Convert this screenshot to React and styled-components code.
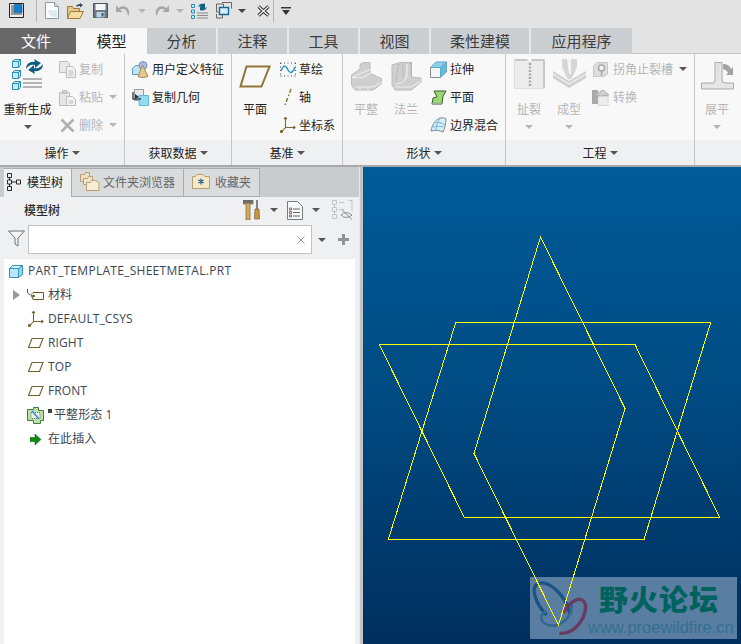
import styled, { createGlobalStyle } from "styled-components";

const CJK = `"Noto Sans CJK SC", "Open Sans", sans-serif`;

const Global = createGlobalStyle`
  html, body { margin: 0; padding: 0; background: #fff; }
  * { box-sizing: border-box; }
`;

/* ---------- icons ---------- */

const Cube = ({ x, y }) => (
  <g transform={`translate(${x} ${y})`}>
    <path d="M.5 2.500 2.500.5h6v6l-2 2h-6z" fill="#c4ecfa" stroke="#2a8db5" />
    <path d="M.5 2.500h6v6M6.500 2.500l2-2" fill="none" stroke="#2a8db5" />
  </g>
);

const RegenIcon = () => (
  <svg width="32" height="34" viewBox="0 0 32 34">
    <Cube x="0" y="0" />
    <Cube x="0" y="11" />
    <Cube x="0" y="22" />
    <path d="M14 10c0-5 4-8 9-7l-1-3 7 4-6 5v-3c-4-1-7 1-9 4zM31 5c0 5-4 8-9 7l1 3-7-4 6-5v3c4 1 7-1 9-4z" fill="#0c5f82" />
    <path d="M11 20h19M11 24h19M11 28h19" stroke="#9c9c9c" strokeWidth="1.600" />
  </svg>
);

const CopyIcon = () => (
  <svg width="17" height="17" viewBox="0 0 17 17" fill="#e8e8e8" stroke="#bdbdbd">
    <path d="M.5.500h8l2 2v9H.5z" />
    <path d="M7.500 5.500h6l3 3v8h-9z" fill="#f2f2f2" />
    <path d="M9.500 10h5M9.500 12h5M9.500 14h5" fill="none" />
  </svg>
);

const PasteIcon = () => (
  <svg width="17" height="17" viewBox="0 0 17 17" fill="#e6e6e6" stroke="#bdbdbd">
    <path d="M.5 3.500h10v13H.5z" />
    <path d="M3.500 1.500h4v3h-4z" fill="#d2d2d2" />
    <path d="M7.500 7.500h6l3 3v6h-9z" fill="#f4f4f4" />
    <path d="M9.500 12h5M9.500 14h5" fill="none" />
  </svg>
);

const DeleteIcon = () => (
  <svg width="15" height="15" viewBox="0 0 15 15">
    <path d="M1.500 1.500l12 12M13.500 1.500l-12 12" stroke="#b0b0b0" strokeWidth="2.600" />
  </svg>
);

const UdfIcon = () => (
  <svg width="17" height="17" viewBox="0 0 17 17">
    <path d="M.5 7.500l3-3h7v9H.5z" fill="#bfe4f3" stroke="#5a9cbc" />
    <circle cx="11" cy="4.500" r="4" fill="#a9b8e6" stroke="#7f8fc4" />
    <path d="M10.500 4 16 15.500q-5 2.400-10 0z" fill="#e3c98f" stroke="#a68b4f" />
  </svg>
);

const CopyGeomIcon = () => (
  <svg width="17" height="17" viewBox="0 0 17 17">
    <path d="M2.500.5h9v11h-9z" fill="#e9e9e9" stroke="#9a9a9a" />
    <path d="M7 6.500h9.500v10H7z" fill="#8fdcf3" stroke="#66b9d4" />
    <path d="M1 3v7h8" fill="none" stroke="#3c4a55" strokeWidth="1.400" />
    <path d="M3 5l4 3-4 2z" fill="#27323c" />
  </svg>
);

const PlaneLargeIcon = () => (
  <svg width="32" height="23" viewBox="0 0 32 23">
    <path d="M7.500 1.500h23l-8 20H1.500z" fill="none" stroke="#8f7638" strokeWidth="2" />
  </svg>
);

const SketchIcon = () => (
  <svg width="16" height="15" viewBox="0 0 16 15">
    <path d="M.5 1h15M.5 14h15M.5 1v13M15.500 1v13" stroke="#3d4a55" strokeDasharray="1 2.500" fill="none" />
    <path d="M1 9c3-8 5-5 7-1s5 3 7-3" fill="none" stroke="#2f97c6" strokeWidth="1.500" />
  </svg>
);

const AxisIcon = () => (
  <svg width="16" height="18" viewBox="0 0 16 18">
    <path d="M11 1 5 17" stroke="#8a7136" strokeWidth="1.500" strokeDasharray="4 2 1.500 2" />
  </svg>
);

const CsysIcon = ({ size = 16 }) => (
  <svg width={size} height={size} viewBox="0 0 16 16" fill="none" stroke="#7a6330" strokeWidth="1.100">
    <path d="M5.500 1v9.500L1.500 15M5.500 10.500H15" />
    <path d="M4 2 5.500.5 7 2M13.500 9l1.500 1.500L13.500 12" />
    <circle cx="1.500" cy="14.500" r="1" fill="#7a6330" />
  </svg>
);

const FlatWallIcon = () => (
  <svg width="31" height="29" viewBox="0 0 31 29">
    <path d="M.5 13 9 7V2.500L12.500.5H19v11l11.500 5v5L22.500 28H4L.5 23z" fill="#cfcfcf" stroke="#bcbcbc" />
    <path d="M1 15.500l18-8M19 11.500 11 16 1 15.500M4 25h18.500l8-5M9 25v3M17 25v3" fill="none" stroke="#ededed" strokeWidth="1.200" />
  </svg>
);

const FlangeIcon = () => (
  <svg width="31" height="29" viewBox="0 0 31 29">
    <path d="M1 3 8.500.5H20.500v14.500l9.500 1v4L20.500 28H4L1 23z" fill="#cfcfcf" stroke="#bcbcbc" />
    <path d="M5 22c5 0 10-3 11-10V2" fill="none" stroke="#eeeeee" strokeWidth="1.200" />
    <path d="M8 2c-2 6-2 12-3 18M12 2v14M20 1v13" fill="none" stroke="#9d9d9d" strokeDasharray="1 1.500" />
    <path d="M4 25h16.500l9-6" fill="none" stroke="#ededed" strokeWidth="1.200" />
  </svg>
);

const ExtrudeIcon = () => (
  <svg width="17" height="17" viewBox="0 0 17 17">
    <path d="M.5 6.500h10v10H.5z" fill="#f6f6f6" stroke="#8b8b8b" />
    <path d="M.5 6.500 6 1h10.500l-6 5.500z" fill="#8fd0ea" stroke="#5ea8c8" />
    <path d="M10.500 6.500l6-5.500v10l-6 5.500z" fill="#6bb8da" stroke="#5ea8c8" />
  </svg>
);

const PlanarIcon = () => (
  <svg width="16" height="15" viewBox="0 0 16 15">
    <path d="M3 1h12l-3 5-1 8H1l1-6 4-1z" fill="#97d86f" stroke="#3f5a30" />
    <path d="M1 13h10l-.3 1.500H1z" fill="#9aa49a" />
  </svg>
);

const BlendIcon = () => (
  <svg width="17" height="16" viewBox="0 0 17 16">
    <path d="M1 14C2 8 5 3 10 1c3-.5 5 0 6 1 0 4-1 9-3 13-4-2-8-2-12-1z" fill="#d6eef8" stroke="#7f8b94" />
    <path d="M5 5c3 0 7 1 10 3M2.500 10c4-1 8-1 11 0M10 1C7 6 6 10 6 14" fill="none" stroke="#6fb5d6" />
  </svg>
);

const RipIcon = () => (
  <svg width="31" height="30" viewBox="0 0 31 30">
    <path d="M.5.500h13l2 5 2-5h13v29H.5z" fill="#ececec" stroke="#cfcfcf" strokeDasharray="1 1" />
    <path d="M1 1h12M18 1h12M30 1v28" stroke="#bdbdbd" strokeWidth="1.500" />
    <path d="M16 4v24" stroke="#a9a9a9" strokeWidth="2.500" strokeDasharray="2 1.500" />
  </svg>
);

const FormIcon = () => (
  <svg width="33" height="30" viewBox="0 0 33 30">
    <path d="M9 0h15v8l-5 11q-2.500 3-5 0L9 8z" fill="#d6d6d6" />
    <path d="M14 0h4v15h-2z" fill="#f2f2f2" />
    <path d="M0 12l16 10 17-10v7L16 29 0 19z" fill="#d0d0d0" />
    <path d="M0 15l16 10 17-10" fill="none" stroke="#f2f2f2" strokeWidth="1.200" />
  </svg>
);

const ReliefIcon = () => (
  <svg width="15" height="15" viewBox="0 0 15 15">
    <path d="M.5 4 4 .5h10.500V12L11 14.500H.5z" fill="#dedede" stroke="#c6c6c6" />
    <circle cx="8.500" cy="6" r="3" fill="#f2f2f2" stroke="#a9a9a9" strokeWidth="1.500" />
    <path d="M8.500 8v6" stroke="#a9a9a9" strokeWidth="1.500" />
  </svg>
);

const ConvertIcon = () => (
  <svg width="17" height="17" viewBox="0 0 17 17">
    <path d="M0 1h6v14H0z" fill="#a8a8a8" />
    <path d="M3 6l8-5 6 5-7 1z" fill="#cfcfcf" stroke="#adadad" />
    <path d="M6 7.500h10v9H6z" fill="#ededed" stroke="#c2c2c2" strokeDasharray="1.500 1" />
  </svg>
);

const UnfoldIcon = () => (
  <svg width="33" height="28" viewBox="0 0 33 28">
    <path d="M14 .500h7V18q0 3 3 3h8.500v6H.5v-6H12q2 0 2-3z" fill="#e6e6e6" stroke="#a9a9a9" />
    <path d="M17 2v15" stroke="#c6c6c6" strokeDasharray="1.500 1.500" />
    <path d="M22 2q6 0 8 5l2-2v8h-7l2-2q-1-3-5-4z" fill="#a2a2a2" />
  </svg>
);

const AppIcon = () => (
  <svg width="15" height="15" viewBox="0 0 15 15">
    <path d="M.5.500h14v14H.5z" fill="#f0f0f0" stroke="#222" />
    <path d="M2 2h3v8h8v2H2z" fill="#9a9a9a" />
    <path d="M5.300 1.500H13v8.200H5.300z" fill="#0e7fd0" stroke="#074f86" strokeWidth=".600" />
  </svg>
);

const NewIcon = () => (
  <svg width="14" height="17" viewBox="0 0 14 17">
    <path d="M.5.500h9l4 4v12H.5z" fill="#fbfdff" stroke="#8c9aa6" />
    <path d="M9.500.500v4h4" fill="#cfdbe4" stroke="#8c9aa6" />
    <path d="M2 8l4 7h6V8z" fill="#dfeaf2" />
  </svg>
);

const OpenIcon = () => (
  <svg width="17" height="16" viewBox="0 0 17 16">
    <path d="M.5 15.500v-12h5l1 2h6v3" fill="#e3c68a" stroke="#a07a3a" />
    <path d="M.5 15.500l3-7h13l-3.500 7z" fill="#f3dca5" stroke="#a07a3a" />
    <path d="M9 4c0-2 2-3 4-3V0l3 2-3 2.500V3c-1 0-3 0-4 1z" fill="#3d4a55" />
  </svg>
);

const SaveIcon = () => (
  <svg width="15" height="15" viewBox="0 0 15 15">
    <path d="M.5.500h14v14H.5z" fill="#6e7b86" stroke="#4b5660" />
    <path d="M2.500 1h10v6h-10z" fill="#f4f6f8" />
    <path d="M3.500 9h8v5.500h-8z" fill="#b9d4e6" />
    <path d="M8.500 10h2v3.500h-2z" fill="#36596f" />
  </svg>
);

const UndoIcon = ({ flip }) => (
  <svg width="15" height="13" viewBox="0 0 16 13" style={flip ? { transform: "scaleX(-1)" } : undefined}>
    <path d="M0 1v7h7L4.500 5.500C7 3.500 11 4.500 12 9l1 3.500c3-6-1-11-6-10.500-1.500.2-3 1-4 2z" fill="#a6a6a6" />
  </svg>
);

const QuickRegenIcon = () => (
  <svg width="17" height="16" viewBox="0 0 17 16">
    <path d="M.5 1.500h3v3h-3zM.5 7h3v3h-3zM.5 12.500h3v3h-3z" fill="#c4ecfa" stroke="#2a8db5" />
    <path d="M7 4c1-3 4-4 6-3l1-1v5H9l1.500-1.500C9.500 3 8 3.500 7 4zM16 4c-1 3-4 4-6 3L9 8V3.500h5L12.500 5c1 .5 2.500 0 3.500-1z" fill="#0c5f82" />
    <path d="M6 10h11M6 12.500h11M6 15h11" stroke="#888" />
  </svg>
);

const WindowsIcon = () => (
  <svg width="16" height="17" viewBox="0 0 16 17" fill="none">
    <path d="M.5 2h7v3M.5 2v8h2M6 .500h9.500v6" stroke="#666" />
    <path d="M3.500 5.500h9v7h-9z" fill="#d9edf7" stroke="#0f6c98" strokeWidth="1.400" />
    <path d="M.5 12v4h6v-3" stroke="#666" />
  </svg>
);

const CloseWinIcon = () => (
  <svg width="15" height="12" viewBox="0 0 15 12">
    <path d="M2.500 1.500l10 9M12.500 1.500l-10 9" stroke="#2f2f2f" strokeWidth="3.200" />
    <path d="M2.500 1.500l10 9M12.500 1.500l-10 9" stroke="#f4f4f4" strokeWidth="1.200" />
  </svg>
);

const OverflowIcon = () => (
  <svg width="10" height="8" viewBox="0 0 10 8">
    <path d="M0 0h10v1.500H0zM1 3h8L5 8z" fill="#333" />
  </svg>
);

const NodesIcon = () => (
  <svg width="14" height="18" viewBox="0 0 14 18" fill="none" stroke="#2a2a2a">
    <path d="M.5.500h4v4h-4zM.5 7h4v4h-4zM.5 13.500h4v4h-4zM9.500 7h4v4h-4zM2.500 4.500V7M2.500 11v2.500M4.500 9h5" />
  </svg>
);

const FoldersIcon = () => (
  <svg width="20" height="19" viewBox="0 0 20 19" stroke="#b99f70">
    <path d="M.5 2.500h4l1-2h4v9h-9z" fill="#ece0c6" />
    <path d="M3.500 6.500h4l1-2h4v8h-9z" fill="#f0e5cd" />
    <path d="M6.500 10.500h4l1-2h4l3.500 2v8H6.500z" fill="#f7eed8" />
  </svg>
);

const FavoritesIcon = () => (
  <svg width="18" height="16" viewBox="0 0 18 16">
    <path d="M.5 3.500h3L5 1.500h6l1.500 2h5v12H.5z" fill="#f5e8c8" stroke="#b99f70" />
    <path d="M9 5.500v6M6.400 7l5.200 3M6.400 10l5.200-3" stroke="#12608c" strokeWidth="1.100" />
  </svg>
);

const ToolsIcon = () => (
  <svg width="17" height="20" viewBox="0 0 17 20">
    <path d="M0 0h10v4H7v16H3V4H0z" fill="#d7ab5e" stroke="#7d6030" strokeWidth=".700" />
    <path d="M0 0h10v3.500H0z" fill="#6c6c6c" />
    <path d="M14 0v9" stroke="#555" strokeWidth="1.400" />
    <path d="M12 9h4l.5 10h-5z" fill="#c59640" stroke="#7d6030" strokeWidth=".700" />
  </svg>
);

const ListIcon = () => (
  <svg width="16" height="19" viewBox="0 0 16 19">
    <path d="M.5.500h10l5 5v13H.5z" fill="#f7f7f7" stroke="#707b84" />
    <path d="M2.500 7h2v2h-2zM2.500 10.500h2v2h-2zM2.500 14h2v2h-2z" fill="none" stroke="#555" strokeWidth=".800" />
    <path d="M6 8h7M6 11.500h7M6 15h7" stroke="#6a6a6a" />
  </svg>
);

const HiddenTreeIcon = () => (
  <svg width="21" height="20" viewBox="0 0 21 20" fill="none" stroke="#c4c4c4">
    <path d="M.5.500h4v4h-4zM.5 7.500h4v4h-4zM.5 14.500h4v4h-4zM7 2.500h5M7 9.500h5M17 .500h3v11" />
    <path d="M2.500 4.500v3M2.500 11.500v3" />
    <path d="M9 15q5-5 11 0-6 5-11 0zM10 10l10 9.500" stroke="#8d8d8d" />
  </svg>
);

const FunnelIcon = () => (
  <svg width="17" height="17" viewBox="0 0 17 17">
    <path d="M.5 1h16L10 8v8l-3-2V8z" fill="#f4f4f4" stroke="#66727c" />
  </svg>
);

const PlusIcon = () => (
  <svg width="11" height="11" viewBox="0 0 11 11">
    <path d="M4 0h3v4h4v3H7v4H4V7H0V4h4z" fill="#929292" />
  </svg>
);

const ClearIcon = () => (
  <svg width="8" height="8" viewBox="0 0 8 8">
    <path d="M.5.500l7 7M7.500.500l-7 7" stroke="#9a9a9a" />
  </svg>
);

const PartIcon = () => (
  <svg width="14" height="13" viewBox="0 0 14 13">
    <path d="M.5 3.500h9v9h-9z" fill="#b4e8fa" stroke="#3c93bd" />
    <path d="M.5 3.500l3-3h10l-4 3z" fill="#d7f3fd" stroke="#3c93bd" />
    <path d="M9.500 3.500l4-3v9l-4 3z" fill="#8fd6ef" stroke="#3c93bd" />
  </svg>
);

const MaterialIcon = () => (
  <svg width="17" height="13" viewBox="0 0 17 13" fill="none" stroke="#6e5427">
    <path d="M.5 0v4L3 6" />
    <path d="M4 5.500l2-2h10.500v7H6z" fill="#fff" />
    <circle cx="6.500" cy="7" r="1" fill="#6e5427" />
  </svg>
);

const PlaneSmallIcon = () => (
  <svg width="16" height="10" viewBox="0 0 16 10">
    <path d="M4 .500h11l-3.500 9H.5z" fill="none" stroke="#75602f" strokeWidth="1.100" />
  </svg>
);

const FlatStateIcon = () => (
  <svg width="17" height="17" viewBox="0 0 17 17">
    <path d="M.5 2.500h6v-2h5v3h5v10h-3v3h-7v-3h-6z" fill="#bfe0ae" stroke="#3e7f3d" />
    <path d="M4 5.500h9v6H4z" fill="#e9efe4" stroke="#6f6f6f" strokeDasharray="1 1" />
    <path d="M5 4l7 8" stroke="#2f8ec4" strokeWidth="1.500" />
  </svg>
);

const InsertIcon = () => (
  <svg width="11" height="11" viewBox="0 0 11 11">
    <path d="M0 3.500h5V0l6 5.500L5 11V7.500H0z" fill="#118a11" stroke="#075c07" strokeWidth=".500" />
  </svg>
);

/* ---------- layout ---------- */

const Page = styled.div`
  width: 741px;
  height: 644px;
  overflow: hidden;
  display: flex;
  flex-direction: column;
  font-family: ${CJK};
  font-size: 12px;
  color: #222;
`;

const QuickBar = styled.div`
  height: 28px;
  flex: none;
  display: flex;
  align-items: center;
  background: #e3e3e3;
  padding: 0 0 7px 9px;
`;

const QuickSlot = styled.span`
  display: flex;
  align-items: center;
  margin-left: ${(p) => p.$ml || 0}px;
`;

const QuickSep = styled.span`
  width: 1px;
  height: 22px;
  background: #b5b5b5;
  margin-left: ${(p) => p.$ml}px;
`;

const Caret = styled.span`
  display: inline-block;
  flex: none;
  width: 0;
  height: 0;
  border-top: 4px solid ${(p) => p.$color || "#555"};
  border-left: 4px solid transparent;
  border-right: 4px solid transparent;
  margin-left: ${(p) => p.$ml || 0}px;
  margin-top: ${(p) => p.$mt || 0}px;
`;

const TabStrip = styled.div`
  height: 26px;
  flex: none;
  display: flex;
  background: #e3e3e3;
  box-shadow: inset 0 -1px 0 #c6c6c6;
`;

const RibbonTab = styled.div`
  width: ${(p) => p.$w}px;
  display: flex;
  align-items: center;
  justify-content: center;
  font-size: 15px;
  line-height: 26px;
  padding-right: ${(p) => (p.$file ? 4 : 0)}px;
  background: ${(p) => (p.$file ? "#686868" : p.$active ? "#f8f8f8" : "#cbced1")};
  color: ${(p) => (p.$file ? "#fff" : p.$active ? "#222" : "#3c3c3c")};
  border-right: ${(p) => (p.$file || p.$active ? "none" : "2px solid #e6e7e8")};
  &:last-child {
    border-right: none;
  }
`;

const Ribbon = styled.div`
  height: 113px;
  flex: none;
  display: flex;
  background: #f8f8f8;
  border-bottom: 2px solid #a9a9a9;
`;

const Group = styled.div`
  width: ${(p) => p.$w}px;
  flex: none;
  display: flex;
  flex-direction: column;
  border-right: 1px solid #c6c6c6;
  &:last-child {
    border-right: none;
  }
`;

const GroupBody = styled.div`
  height: 86px;
  display: flex;
  padding-left: ${(p) => p.$pad || 0}px;
`;

const GroupFooter = styled.div`
  height: 25px;
  display: flex;
  align-items: center;
  justify-content: center;
  gap: 3px;
  background: #eff0f1;
`;

const BigButton = styled.div`
  width: ${(p) => p.$w || 40}px;
  flex: none;
  display: flex;
  flex-direction: column;
  align-items: center;
  padding-top: 5px;
`;

const BigIcon = styled.div`
  height: 38px;
  display: flex;
  align-items: flex-start;
  margin-top: ${(p) => p.$mt || 0}px;
`;

const Label = styled.span`
  line-height: 16px;
  white-space: nowrap;
  color: ${(p) => (p.$off ? "#b5b5b5" : "#222")};
`;

const BigLabel = styled(Label)`
  margin-top: ${(p) => 4 - (p.$mt || 0)}px;
`;

const SmallColumn = styled.div`
  display: flex;
  flex-direction: column;
  padding-top: 1px;
  margin-left: ${(p) => p.$ml || 0}px;
`;

const SmallRow = styled.div`
  height: 28px;
  display: flex;
  align-items: center;
`;

const SmallIcon = styled.span`
  width: 17px;
  flex: none;
  display: flex;
  justify-content: center;
  margin-right: ${(p) => p.$gap || 3}px;
`;

const Main = styled.div`
  flex: 1;
  min-height: 0;
  display: flex;
`;

const SidePanel = styled.div`
  width: 359px;
  flex: none;
  display: flex;
  flex-direction: column;
  background: #eef0f2;
`;

const SideTabs = styled.div`
  height: 30px;
  flex: none;
  display: flex;
  align-items: flex-end;
  padding-left: 4px;
  background: #c9ccce;
`;

const SideTab = styled.div`
  width: ${(p) => p.$w}px;
  height: 29px;
  display: flex;
  align-items: center;
  gap: ${(p) => p.$gap}px;
  padding-left: ${(p) => p.$pad}px;
  padding-bottom: 3px;
  background: ${(p) => (p.$active ? "#eef0f2" : "#d9dbdc")};
  border: 1px solid #a9abad;
  border-bottom: ${(p) => (p.$active ? "none" : "1px solid #a9abad")};
  border-left: none;
  font-size: 12px;
  color: ${(p) => (p.$active ? "#222" : "#666")};
`;

const TreeToolbar = styled.div`
  height: 28px;
  flex: none;
  display: flex;
  align-items: center;
  padding: 0 0 2px 24px;
`;

const TreeTitle = styled.span`
  width: 219px;
  font-weight: 500;
  line-height: 16px;
  color: #2b2b2b;
`;

const ToolSlot = styled.span`
  display: flex;
  align-items: center;
  margin-left: ${(p) => p.$ml || 0}px;
`;

const FilterRow = styled.div`
  height: 34px;
  flex: none;
  display: flex;
  align-items: flex-start;
  padding-left: 8px;
`;

const FunnelSlot = styled.span`
  width: 20px;
  display: flex;
  padding-top: 5px;
`;

const FilterInput = styled.div`
  width: 284px;
  height: 29px;
  display: flex;
  align-items: center;
  justify-content: flex-end;
  padding-right: 6px;
  background: #fff;
  border: 1px solid #c2c2c2;
`;

const FilterActions = styled.span`
  display: flex;
  align-items: center;
  height: 29px;
  padding-left: 6px;
  gap: 12px;
`;

const TreePane = styled.div`
  flex: 1;
  margin: 0 4px;
  background: #fff;
`;

const TreeRoot = styled.div`
  height: 24px;
  display: flex;
  align-items: center;
  padding-left: 3px;
`;

const TreeRow = styled.div`
  height: 24px;
  display: flex;
  align-items: center;
  padding-left: 9px;
`;

const Expander = styled.span`
  width: 14px;
  flex: none;
  display: flex;
  ${(p) =>
    p.$show &&
    `&::before {
      content: "";
      border-left: 7px solid #999;
      border-top: 5px solid transparent;
      border-bottom: 5px solid transparent;
    }`}
`;

const TreeIcon = styled.span`
  width: 17px;
  flex: none;
  display: flex;
  justify-content: center;
  margin-right: 4px;
`;

const TreeText = styled.span`
  font-family: "Open Sans", ${CJK};
  font-size: 12px;
  line-height: 16px;
  letter-spacing: ${(p) => (p.$wide ? 0.28 : 0.1)}px;
  color: #3a4653;
  white-space: nowrap;
`;

const Marker = styled.span`
  width: 4px;
  height: 4px;
  background: #444;
  margin: 0 2px 8px 0;
`;

const Divider = styled.div`
  width: 4px;
  flex: none;
  background: #c4c4c4;
  box-shadow: inset 1px 0 0 #e8e8e8;
`;

const Canvas = styled.div`
  position: relative;
  flex: 1;
  background: linear-gradient(#005b98 0%, #004c84 45%, #002f5e 100%);
`;

const Drawing = styled.svg`
  position: absolute;
  inset: 0;
  width: 100%;
  height: 100%;
`;

const Watermark = styled.div`
  position: absolute;
  right: 4px;
  bottom: 5px;
  width: 207px;
  height: 62px;
  background: #5a7ea2;
`;

const WatermarkLogo = styled.svg`
  position: absolute;
  left: 0;
  top: 0;
  width: 70px;
  height: 62px;
`;

const WatermarkTitle = styled.div`
  position: absolute;
  left: 69px;
  top: 3px;
  font-size: 29px;
  line-height: 36px;
  font-weight: 900;
  letter-spacing: 1px;
  color: #00625f;
  white-space: nowrap;
`;

const WatermarkUrl = styled.div`
  position: absolute;
  left: 58px;
  top: 40px;
  font-family: "Liberation Sans", sans-serif;
  font-size: 16.500px;
  line-height: 20px;
  color: #31708f;
  white-space: nowrap;
`;

const TABS = [
  { label: "文件", w: 76, file: true },
  { label: "模型", w: 71, active: true },
  { label: "分析", w: 71 },
  { label: "注释", w: 71 },
  { label: "工具", w: 71 },
  { label: "视图", w: 71 },
  { label: "柔性建模", w: 100 },
  { label: "应用程序", w: 101 },
];

const TREE_FEATURES = [
  { label: "RIGHT" },
  { label: "TOP" },
  { label: "FRONT" },
];

const OUTLINES = [
  "177.500,70 262,241.500 195.500,458 111,286.500",
  "92.700,155.500 347.700,155.500 281,372.500 25.300,372.500",
  "16.300,177.500 272,177.500 356.700,350.500 101.300,350.500",
];

const App = () => {
  return (
    <Page>
      <Global />
      <QuickBar>
        <AppIcon />
        <QuickSep $ml={12} />
        <QuickSlot $ml={8}><NewIcon /></QuickSlot>
        <QuickSlot $ml={8}><OpenIcon /></QuickSlot>
        <QuickSlot $ml={9}><SaveIcon /></QuickSlot>
        <QuickSlot $ml={8}><UndoIcon /></QuickSlot>
        <Caret $ml={7} $color="#b5b5b5" />
        <QuickSlot $ml={8}><UndoIcon flip /></QuickSlot>
        <Caret $ml={7} $color="#b5b5b5" />
        <QuickSlot $ml={7}><QuickRegenIcon /></QuickSlot>
        <QuickSlot $ml={8}><WindowsIcon /></QuickSlot>
        <Caret $ml={6} $color="#444" />
        <QuickSlot $ml={10}><CloseWinIcon /></QuickSlot>
        <QuickSep $ml={2} />
        <QuickSlot $ml={7}><OverflowIcon /></QuickSlot>
      </QuickBar>

      <TabStrip>
        {TABS.map((tab) => (
          <RibbonTab key={tab.label} $w={tab.w} $file={tab.file} $active={tab.active}>
            {tab.label}
          </RibbonTab>
        ))}
      </TabStrip>

      <Ribbon>
        <Group $w={125}>
          <GroupBody>
            <BigButton $w={55}>
              <BigIcon><RegenIcon /></BigIcon>
              <BigLabel>重新生成</BigLabel>
              <Caret $mt={8} />
            </BigButton>
            <SmallColumn $ml={4}>
              <SmallRow><SmallIcon><CopyIcon /></SmallIcon><Label $off>复制</Label></SmallRow>
              <SmallRow><SmallIcon><PasteIcon /></SmallIcon><Label $off>粘贴</Label><Caret $ml={6} $color="#b5b5b5" /></SmallRow>
              <SmallRow><SmallIcon><DeleteIcon /></SmallIcon><Label $off>删除</Label><Caret $ml={6} $color="#b5b5b5" /></SmallRow>
            </SmallColumn>
          </GroupBody>
          <GroupFooter>操作<Caret /></GroupFooter>
        </Group>

        <Group $w={107}>
          <GroupBody $pad={7}>
            <SmallColumn>
              <SmallRow><SmallIcon><UdfIcon /></SmallIcon><Label>用户定义特征</Label></SmallRow>
              <SmallRow><SmallIcon><CopyGeomIcon /></SmallIcon><Label>复制几何</Label></SmallRow>
            </SmallColumn>
          </GroupBody>
          <GroupFooter>获取数据<Caret /></GroupFooter>
        </Group>

        <Group $w={111}>
          <GroupBody $pad={3}>
            <BigButton>
              <BigIcon $mt={6}><PlaneLargeIcon /></BigIcon>
              <BigLabel $mt={6}>平面</BigLabel>
            </BigButton>
            <SmallColumn $ml={4}>
              <SmallRow><SmallIcon><SketchIcon /></SmallIcon><Label>草绘</Label></SmallRow>
              <SmallRow><SmallIcon><AxisIcon /></SmallIcon><Label>轴</Label></SmallRow>
              <SmallRow><SmallIcon><CsysIcon /></SmallIcon><Label>坐标系</Label></SmallRow>
            </SmallColumn>
          </GroupBody>
          <GroupFooter>基准<Caret /></GroupFooter>
        </Group>

        <Group $w={163}>
          <GroupBody $pad={3}>
            <BigButton>
              <BigIcon $mt={3}><FlatWallIcon /></BigIcon>
              <BigLabel $mt={3} $off>平整</BigLabel>
            </BigButton>
            <BigButton>
              <BigIcon $mt={3}><FlangeIcon /></BigIcon>
              <BigLabel $mt={3} $off>法兰</BigLabel>
            </BigButton>
            <SmallColumn $ml={4}>
              <SmallRow><SmallIcon><ExtrudeIcon /></SmallIcon><Label>拉伸</Label></SmallRow>
              <SmallRow><SmallIcon><PlanarIcon /></SmallIcon><Label>平面</Label></SmallRow>
              <SmallRow><SmallIcon><BlendIcon /></SmallIcon><Label>边界混合</Label></SmallRow>
            </SmallColumn>
          </GroupBody>
          <GroupFooter>形状<Caret /></GroupFooter>
        </Group>

        <Group $w={189}>
          <GroupBody $pad={3}>
            <BigButton>
              <BigIcon><RipIcon /></BigIcon>
              <BigLabel $off>扯裂</BigLabel>
              <Caret $mt={8} $color="#b5b5b5" />
            </BigButton>
            <BigButton>
              <BigIcon><FormIcon /></BigIcon>
              <BigLabel $off>成型</BigLabel>
              <Caret $mt={8} $color="#b5b5b5" />
            </BigButton>
            <SmallColumn $ml={3}>
              <SmallRow><SmallIcon $gap={4}><ReliefIcon /></SmallIcon><Label $off>拐角止裂槽</Label><Caret $ml={6} /></SmallRow>
              <SmallRow><SmallIcon $gap={4}><ConvertIcon /></SmallIcon><Label $off>转换</Label></SmallRow>
            </SmallColumn>
          </GroupBody>
          <GroupFooter>工程<Caret /></GroupFooter>
        </Group>

        <Group $w={46}>
          <GroupBody $pad={2}>
            <BigButton>
              <BigIcon $mt={3}><UnfoldIcon /></BigIcon>
              <BigLabel $mt={3} $off>展平</BigLabel>
              <Caret $mt={8} $color="#b5b5b5" />
            </BigButton>
          </GroupBody>
          <GroupFooter />
        </Group>
      </Ribbon>

      <Main>
        <SidePanel>
          <SideTabs>
            <SideTab $w={68} $pad={3} $gap={6} $active><NodesIcon />模型树</SideTab>
            <SideTab $w={112} $pad={8} $gap={3}><FoldersIcon />文件夹浏览器</SideTab>
            <SideTab $w={76} $pad={8} $gap={5}><FavoritesIcon />收藏夹</SideTab>
          </SideTabs>
          <TreeToolbar>
            <TreeTitle>模型树</TreeTitle>
            <ToolSlot><ToolsIcon /></ToolSlot>
            <Caret $ml={10} />
            <ToolSlot $ml={9}><ListIcon /></ToolSlot>
            <Caret $ml={9} />
            <ToolSlot $ml={12}><HiddenTreeIcon /></ToolSlot>
          </TreeToolbar>
          <FilterRow>
            <FunnelSlot><FunnelIcon /></FunnelSlot>
            <FilterInput><ClearIcon /></FilterInput>
            <FilterActions><Caret /><PlusIcon /></FilterActions>
          </FilterRow>
          <TreePane>
            <TreeRoot>
              <TreeIcon><PartIcon /></TreeIcon>
              <TreeText $wide>PART_TEMPLATE_SHEETMETAL.PRT</TreeText>
            </TreeRoot>
            <TreeRow>
              <Expander $show />
              <TreeIcon><MaterialIcon /></TreeIcon>
              <TreeText>材料</TreeText>
            </TreeRow>
            <TreeRow>
              <Expander />
              <TreeIcon><CsysIcon /></TreeIcon>
              <TreeText>DEFAULT_CSYS</TreeText>
            </TreeRow>
            {TREE_FEATURES.map((feature) => (
              <TreeRow key={feature.label}>
                <Expander />
                <TreeIcon><PlaneSmallIcon /></TreeIcon>
                <TreeText>{feature.label}</TreeText>
              </TreeRow>
            ))}
            <TreeRow>
              <Expander />
              <TreeIcon><FlatStateIcon /></TreeIcon>
              <Marker />
              <TreeText>平整形态 1</TreeText>
            </TreeRow>
            <TreeRow>
              <Expander />
              <TreeIcon><InsertIcon /></TreeIcon>
              <TreeText>在此插入</TreeText>
            </TreeRow>
          </TreePane>
        </SidePanel>
        <Divider />
        <Canvas>
          <Watermark>
            <WatermarkLogo viewBox="30 21 210 186" fill="none">
              <path d="M150 135C140 80 90 30 55 40 30 50 45 100 80 135" stroke="#1b5585" strokeWidth="10" />
              <path d="M155 100c5 40-35 75-70 65-30-10-25-35-5-40" stroke="#34688f" strokeWidth="8" />
              <path d="M118 190c52 5 87-60 77-90-10-25-45-10-65 30" stroke="#6a3a63" strokeWidth="10" />
            </WatermarkLogo>
            <WatermarkTitle>野火论坛</WatermarkTitle>
            <WatermarkUrl>www.proewildfire.cn</WatermarkUrl>
          </Watermark>
          <Drawing viewBox="0 0 378 477" preserveAspectRatio="none" fill="none" stroke="#ffff00" strokeWidth="1" shapeRendering="crispEdges">
            {OUTLINES.map((points) => (
              <polygon key={points} points={points} />
            ))}
          </Drawing>
        </Canvas>
      </Main>
    </Page>
  );
};

export default App;
